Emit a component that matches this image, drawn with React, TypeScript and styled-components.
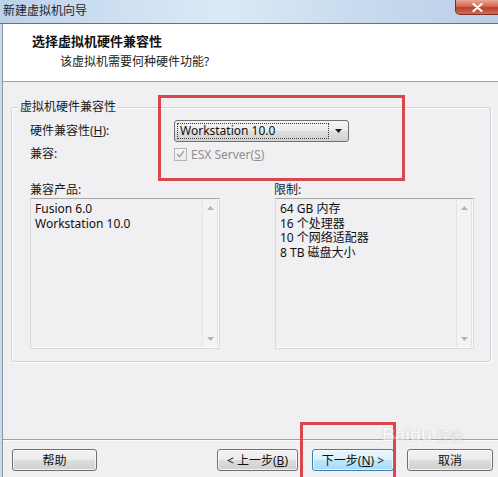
import React from "react";
import styled, { createGlobalStyle } from "styled-components";

const FACE = "#f0eff1";

const GlobalStyle = createGlobalStyle`
  html, body {
    margin: 0;
    padding: 0;
    background: ${FACE};
  }
  body {
    font-family: "Noto Sans", "Noto Sans CJK SC", sans-serif;
    font-size: 12px;
    color: #1b1b1b;
  }
`;

const Window = styled.div`
  position: relative;
  width: 498px;
  height: 477px;
  overflow: hidden;
  display: flex;
  flex-direction: column;
  background: ${FACE};
`;

const TitleBar = styled.div`
  flex: none;
  height: 23px;
  display: flex;
  align-items: flex-start;
  justify-content: space-between;
  border-bottom: 1px solid #5f7489;
  background: linear-gradient(90deg, #bcd2ea 0%, #cfe0f2 25%, #dce9f6 45%, #c9dcef 70%, #b9cfe7 100%);
`;

const TitleText = styled.span`
  padding: 3px 0 0 3px;
  line-height: 16px;
  color: #1e1e1e;
`;

const CloseButton = styled.div`
  width: 42px;
  height: 14px;
  margin-right: -1px;
  display: flex;
  align-items: center;
  justify-content: center;
  border: 1px solid #7a2f25;
  border-top: none;
  border-radius: 0 0 0 5px;
  background: linear-gradient(#e8a795 0%, #d06a56 45%, #bd3f2b 55%, #cf6e58 100%);
`;

const Body = styled.div`
  flex: 1;
  display: flex;
  flex-direction: column;
  border-left: 2px solid #cdd9e6;
  padding-left: 1px;
  box-shadow: inset 1px 0 0 #8596a8;
`;

const Header = styled.div`
  flex: none;
  height: 58px;
  box-sizing: border-box;
  padding: 9px 0 0 29px;
  background: #fff;
  border-bottom: 1px solid #a4a4a4;
`;

const HeaderTitle = styled.div`
  font-weight: bold;
  font-size: 13px;
  line-height: 16px;
  color: #111;
`;

const HeaderSub = styled.div`
  margin: 5px 0 0 28px;
  line-height: 16px;
  color: #222;
`;

const Main = styled.div`
  flex: 1;
  display: flex;
  flex-direction: column;
`;

const GroupBox = styled.div`
  margin: 25px 7px 0 8px;
  height: 255px;
  box-sizing: border-box;
  padding-left: 18px;
  display: flex;
  flex-direction: column;
  border: 1px solid #d3d3d7;
  border-radius: 3px;
  box-shadow: inset 1px 1px 0 #fff, 1px 1px 0 #fff;
`;

const Legend = styled.div`
  align-self: flex-start;
  margin: -9px 0 0 -12px;
  padding: 0 2px;
  line-height: 16px;
  background: ${FACE};
`;

const FormGrid = styled.div`
  margin-top: 5px;
  display: grid;
  grid-template-columns: 144px 175px;
  grid-template-rows: 22px 20px;
  row-gap: 2px;
  align-items: center;
`;

const FieldLabel = styled.span`
  line-height: 16px;
`;

const Dropdown = styled.div`
  height: 22px;
  box-sizing: border-box;
  display: flex;
  align-items: center;
  padding: 0 6px 0 2px;
  border: 1px solid #707070;
  border-radius: 3px;
  background: linear-gradient(#f4f4f4 0%, #ececec 50%, #dedede 52%, #d2d2d2 100%);
`;

const DropValue = styled.div`
  flex: 1;
  height: 16px;
  box-sizing: border-box;
  margin-right: 6px;
  padding-left: 2px;
  line-height: 14px;
  border: 1px dotted #3a3a3a;
  color: #111;
`;

const CheckRow = styled.div`
  display: flex;
  align-items: center;
  gap: 4px;
  color: #8e8e8e;
`;

const CheckBox = styled.div`
  width: 13px;
  height: 13px;
  box-sizing: border-box;
  display: flex;
  align-items: center;
  justify-content: center;
  border: 1px solid #b5b5b5;
  background: linear-gradient(#f6f6f6, #ebebeb);
`;

const ListsGrid = styled.div`
  margin-top: 18px;
  display: grid;
  grid-template-columns: 190px 199px;
  column-gap: 55px;
`;

const ListColumn = styled.div<{ $labelShift?: number }>`
  display: flex;
  flex-direction: column;

  > span {
    margin-left: ${(p) => p.$labelShift ?? 0}px;
  }
`;

const ListBox = styled.div`
  height: 151px;
  box-sizing: border-box;
  display: flex;
  border: 1px solid #dadadc;
  border-top-color: #a8a8aa;
  background: ${FACE};
  box-shadow: inset -1px -1px 0 #fafafa;
`;

const ListItems = styled.div`
  flex: 1;
  padding: 3px 0 0 4px;
  line-height: 14.5px;
  color: #111;
`;

const ScrollBar = styled.div`
  width: 14px;
  margin: 1px 1px 1px 0;
  display: flex;
  flex-direction: column;
  justify-content: space-between;
  align-items: center;
  border-left: 1px solid #e3e3e5;
  border-right: 1px solid #e3e3e5;
  background: #f3f2f4;
`;

const ScrollArrow = styled.div`
  height: 16px;
  display: flex;
  align-items: center;
  justify-content: center;
`;

const Footer = styled.div`
  flex: none;
  height: 38px;
  box-sizing: border-box;
  display: flex;
  align-items: flex-start;
  padding: 9px 5px 0 9px;
  border-top: 1px solid #a0a0a0;
  box-shadow: inset 0 1px 0 #fbfbfb;
`;

const Button = styled.div<{ $w: number; $gap?: number; $primary?: boolean }>`
  width: ${(p) => p.$w}px;
  height: 22px;
  box-sizing: border-box;
  margin-left: ${(p) => (p.$gap === undefined ? "0" : p.$gap < 0 ? "auto" : `${p.$gap}px`)};
  display: flex;
  align-items: center;
  justify-content: center;
  border: 1px solid ${(p) => (p.$primary ? "#3c7fb1" : "#707070")};
  border-radius: 3px;
  color: #111;
  background: ${(p) =>
    p.$primary
      ? "linear-gradient(#eaf6fd 0%, #d9f0fc 50%, #bee6fd 52%, #a7d9f5 100%)"
      : "linear-gradient(#f2f2f2 0%, #ebebeb 50%, #dddddd 52%, #cfcfcf 100%)"};
  box-shadow: inset 0 0 0 1px rgba(255, 255, 255, 0.7);
`;

const Annotation = styled.div<{ $x: number; $y: number; $w: number; $h: number }>`
  position: absolute;
  left: ${(p) => p.$x}px;
  top: ${(p) => p.$y}px;
  width: ${(p) => p.$w}px;
  height: ${(p) => p.$h}px;
  box-sizing: border-box;
  border: 3px solid #d8474b;
  pointer-events: none;
`;

const Watermark = styled.div`
  position: absolute;
  left: 382px;
  top: 426px;
  display: flex;
  align-items: flex-end;
  opacity: 0.5;
  color: #fff;
  font: bold 18px/18px "Liberation Sans", sans-serif;
  text-shadow: 0 0 1px #9a9a9a, 0 0 1px #9a9a9a;
  pointer-events: none;

  small {
    font: 13px/16px "Noto Sans CJK SC", sans-serif;
    margin-left: 5px;
  }
`;

const UpArrow = () => (
  <svg width="7" height="4" viewBox="0 0 7 4">
    <path d="M0 4 L3.5 0 L7 4 Z" fill="#b4b4b4" />
  </svg>
);

const DownArrow = ({ color = "#b4b4b4" }: { color?: string }) => (
  <svg width="7" height="4" viewBox="0 0 7 4">
    <path d="M0 0 L7 0 L3.5 4 Z" fill={color} />
  </svg>
);

const List = ({ items }: { items: string[] }) => (
  <ListBox>
    <ListItems>
      {items.map((item) => (
        <div key={item}>{item}</div>
      ))}
    </ListItems>
    <ScrollBar>
      <ScrollArrow>
        <UpArrow />
      </ScrollArrow>
      <ScrollArrow>
        <DownArrow />
      </ScrollArrow>
    </ScrollBar>
  </ListBox>
);

export default function App() {
  return (
    <Window>
      <GlobalStyle />
      <TitleBar>
        <TitleText>新建虚拟机向导</TitleText>
        <CloseButton>
          <svg width="11" height="9" viewBox="0 0 11 9">
            <path d="M1.5 1 L9.5 8 M9.5 1 L1.5 8" stroke="#fff" strokeWidth="2.2" strokeLinecap="round" />
          </svg>
        </CloseButton>
      </TitleBar>
      <Body>
        <Header>
          <HeaderTitle>选择虚拟机硬件兼容性</HeaderTitle>
          <HeaderSub>该虚拟机需要何种硬件功能?</HeaderSub>
        </Header>
        <Main>
          <GroupBox>
            <Legend>虚拟机硬件兼容性</Legend>
            <FormGrid>
              <FieldLabel>
                硬件兼容性(<u>H</u>):
              </FieldLabel>
              <Dropdown>
                <DropValue>Workstation 10.0</DropValue>
                <DownArrow color="#1a1a1a" />
              </Dropdown>
              <FieldLabel>兼容:</FieldLabel>
              <CheckRow>
                <CheckBox>
                  <svg width="9" height="8" viewBox="0 0 9 8">
                    <path d="M1 4 L3.5 6.5 L8 1" stroke="#a9a9a9" strokeWidth="1.6" fill="none" />
                  </svg>
                </CheckBox>
                <span>
                  ESX Server(<u>S</u>)
                </span>
              </CheckRow>
            </FormGrid>
            <ListsGrid>
              <ListColumn>
                <FieldLabel>兼容产品:</FieldLabel>
                <List items={["Fusion 6.0", "Workstation 10.0"]} />
              </ListColumn>
              <ListColumn $labelShift={-1}>
                <FieldLabel>限制:</FieldLabel>
                <List items={["64 GB 内存", "16 个处理器", "10 个网络适配器", "8 TB 磁盘大小"]} />
              </ListColumn>
            </ListsGrid>
          </GroupBox>
        </Main>
        <Footer>
          <Button $w={85}>帮助</Button>
          <Button $w={81} $gap={-1}>
            &lt; 上一步(<u>B</u>)
          </Button>
          <Button $w={82} $gap={14} $primary>
            下一步(<u>N</u>) &gt;
          </Button>
          <Button $w={86} $gap={13}>
            取消
          </Button>
        </Footer>
      </Body>
      <Annotation $x={158} $y={95} $w={247} $h={86} />
      <Annotation $x={300} $y={422} $w={96} $h={60} />
      <Watermark>
        Bai<span>du</span>
        <small>经验</small>
      </Watermark>
    </Window>
  );
}
